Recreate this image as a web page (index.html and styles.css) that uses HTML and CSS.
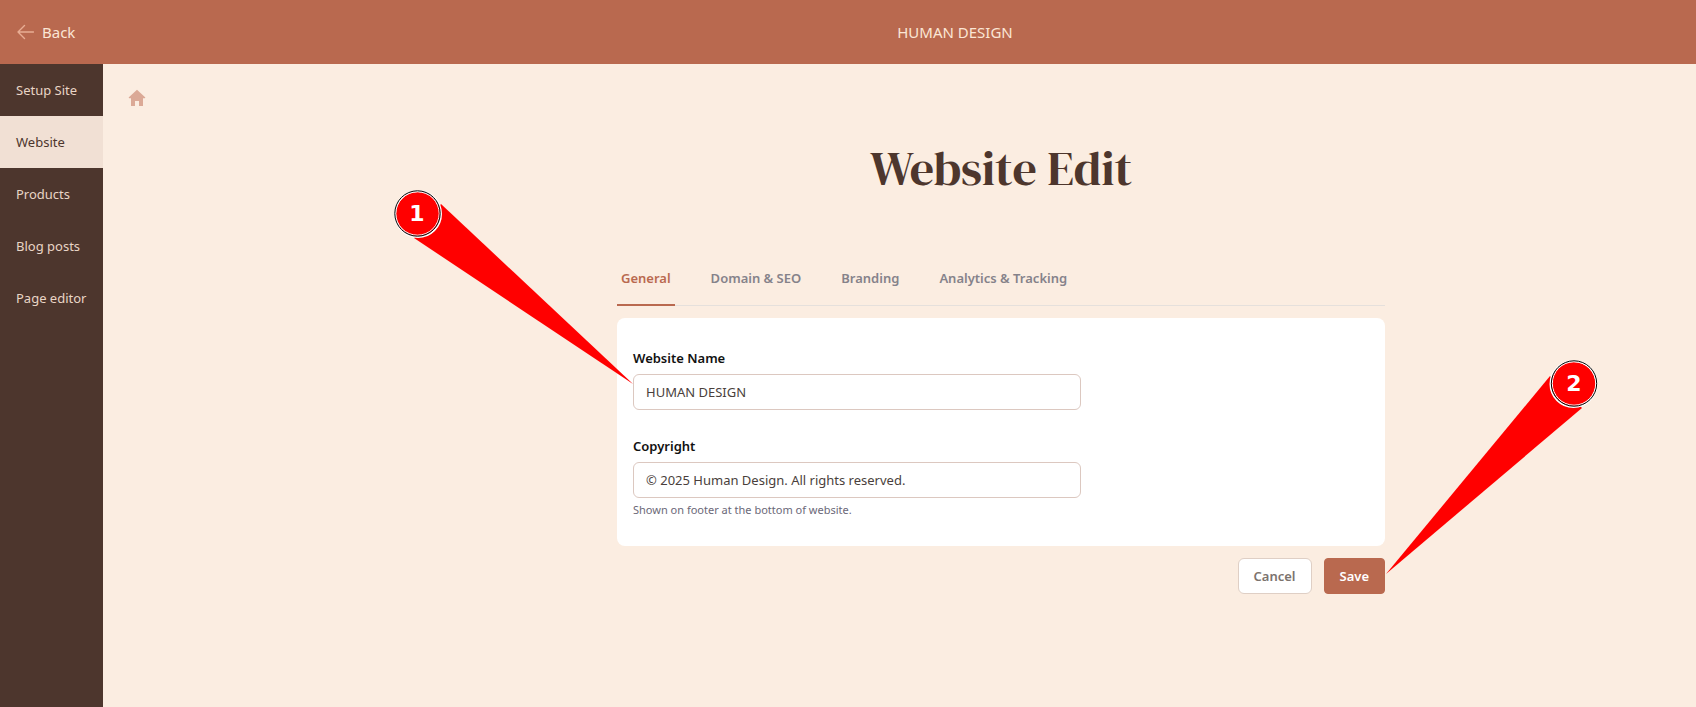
FILE: index.html
```html
<!DOCTYPE html>
<html lang="en">
<head>
    <meta charset="UTF-8">
    <meta name="viewport" content="width=device-width, initial-scale=1.0">
    <title>Website Edit</title>
    <link rel="stylesheet" href="styles.css">
</head>
<body>
    <header class="topbar">
        <a href="#" class="back-link">
            <svg class="back-icon" width="18" height="16" viewBox="0 0 18 16" fill="none" stroke="currentColor" stroke-width="1.4" stroke-linecap="round" stroke-linejoin="round" aria-hidden="true">
                <path d="M8.500 1.500 2 8 8.500 14.500M2 8H17.500"/>
            </svg>
            Back
        </a>
        <div class="site-name">HUMAN DESIGN</div>
    </header>

    <div class="layout">
        <nav class="sidebar">
            <a href="#">Setup Site</a>
            <a href="#" class="active">Website</a>
            <a href="#">Products</a>
            <a href="#">Blog posts</a>
            <a href="#">Page editor</a>
        </nav>

        <div class="breadcrumb">
            <a href="#" aria-label="Home">
                <svg width="18" height="18" viewBox="0 0 18 18" fill="currentColor" aria-hidden="true">
                    <path d="M9 .8.600 8.600 1.200 9.300H3V17H7V12H11V17H15V9.300H16.800L17.400 8.600Z"/>
                </svg>
            </a>
        </div>

        <main class="content">
            <h1>Website Edit</h1>

            <div class="tabs">
                <a href="#" class="active">General</a>
                <a href="#">Domain &amp; SEO</a>
                <a href="#">Branding</a>
                <a href="#">Analytics &amp; Tracking</a>
            </div>

            <form id="websiteForm">
                <div class="card">
                    <div class="form-group">
                        <label for="name">Website Name</label>
                        <div class="input-wrap">
                            <input type="text" id="name" name="name" value="HUMAN DESIGN">
                            <svg class="callout callout-name" width="240" height="196" viewBox="0 0 240 196">
                                <path d="M48 15 240 195 21 49Z" fill="#f00"/>
                                <circle cx="25" cy="25" r="23" fill="#f00" stroke="#fff" stroke-width="2"/>
                                <circle cx="24.500" cy="24.500" r="21.700" fill="none" stroke="#fff"/>
                                <circle cx="24.500" cy="24.500" r="22.700" fill="none" stroke="#000"/>
                                <text x="24" y="32">1</text>
                            </svg>
                        </div>
                    </div>
                    <div class="form-group">
                        <label for="copyright">Copyright</label>
                        <div class="input-wrap">
                            <input type="text" id="copyright" name="copyright" value="© 2025 Human Design. All rights reserved.">
                        </div>
                        <div class="hint">Shown on footer at the bottom of website.</div>
                    </div>
                </div>

                <div class="actions">
                    <button type="button" class="btn">Cancel</button>
                    <div class="save-wrap">
                        <button type="submit" class="btn btn-primary">Save</button>
                        <svg class="callout callout-save" width="214" height="216" viewBox="0 0 214 216">
                            <path d="M165 17 1 215 197 49Z" fill="#f00"/>
                            <circle cx="188.500" cy="25" r="23" fill="#f00" stroke="#fff" stroke-width="2"/>
                            <circle cx="189" cy="24.500" r="21.700" fill="none" stroke="#fff"/>
                            <circle cx="189" cy="24.500" r="22.700" fill="none" stroke="#000"/>
                            <text x="189" y="32">2</text>
                        </svg>
                    </div>
                </div>
            </form>
        </main>
    </div>
</body>
</html>
```
FILE: styles.css
```css
* {
    box-sizing: border-box;
}

body {
    margin: 0;
    min-height: 100vh;
    display: flex;
    flex-direction: column;
    font-family: "Segoe UI", "Noto Sans", sans-serif;
    font-size: 13px;
    line-height: 20px;
    color: #4d362d;
    background: #fbede1;
}

a {
    color: inherit;
    text-decoration: none;
}

/* Top bar */
.topbar {
    display: flex;
    align-items: center;
    height: 64px;
    padding-left: 16px;
    background: #b9694f;
    color: #fbe6d5;
    font-size: 15px;
}

.back-link {
    display: flex;
    align-items: center;
    gap: 8px;
    width: 198px;
}

.back-icon {
    color: #e8ad94;
}

.site-name {
    flex: 1;
    text-align: center;
}

/* Page columns */
.layout {
    flex: 1;
    display: flex;
}

.sidebar {
    width: 103px;
    background: #4d362d;
    color: #e9d5c6;
}

.sidebar a {
    display: block;
    padding: 16px;
    white-space: nowrap;
}

.sidebar a.active {
    background: #f1e0d4;
    color: #4d362d;
}

.breadcrumb {
    width: 203px;
    padding: 25px;
    color: #dba996;
}

.breadcrumb svg {
    display: block;
}

.content {
    flex: 1;
    padding-top: 74px;
}

h1 {
    margin: 0 0 54px;
    font-family: "DM Serif Display", "Liberation Serif", serif;
    font-size: 48px;
    font-weight: 400;
    line-height: 60px;
    text-align: center;
}

.tabs,
form {
    max-width: 768px;
    margin: 0 auto;
}

/* Tabs */
.tabs {
    display: flex;
    gap: 32px;
    border-bottom: 1px solid #e5e0dc;
    font-weight: 600;
    color: #85828a;
}

.tabs a {
    padding: 16px 4px;
    margin-bottom: -1px;
    border-bottom: 2px solid transparent;
}

.tabs a.active {
    color: #b9694f;
    border-color: #b9694f;
}

/* Form */
.card {
    margin-top: 12px;
    padding: 30px 16px 28px;
    background: #fff;
    border-radius: 8px;
}

.form-group + .form-group {
    margin-top: 26px;
}

.form-group label {
    display: block;
    margin-bottom: 6px;
    font-weight: 600;
    color: #111;
}

.input-wrap {
    position: relative;
    max-width: 448px;
}

.input-wrap input {
    display: block;
    width: 100%;
    height: 36px;
    padding: 0 12px;
    border: 1px solid #dcc8c0;
    border-radius: 6px;
    font: inherit;
    color: #4a3f3c;
    background: #fff;
}

.hint {
    margin-top: 4px;
    font-size: 11px;
    line-height: 16px;
    color: #6b6878;
}

.actions {
    display: flex;
    justify-content: flex-end;
    gap: 12px;
    margin-top: 12px;
}

.save-wrap {
    position: relative;
}

.btn {
    height: 36px;
    padding: 0 15px;
    border: 1px solid #dfcfc5;
    border-radius: 6px;
    background: #fff;
    color: #7c736e;
    font: inherit;
    font-weight: 600;
    cursor: pointer;
}

.btn-primary {
    border-color: #b9694f;
    border-radius: 4px;
    background: #b9694f;
    color: #fff;
}

/* Numbered callouts */
.callout {
    position: absolute;
    pointer-events: none;
}

.callout text {
    fill: #fff;
    font-family: Verdana, "DejaVu Sans", sans-serif;
    font-size: 22px;
    font-weight: bold;
    text-anchor: middle;
}

.callout-name {
    right: 100%;
    top: -185px;
}

.callout-save {
    left: 100%;
    top: -199px;
}
```
